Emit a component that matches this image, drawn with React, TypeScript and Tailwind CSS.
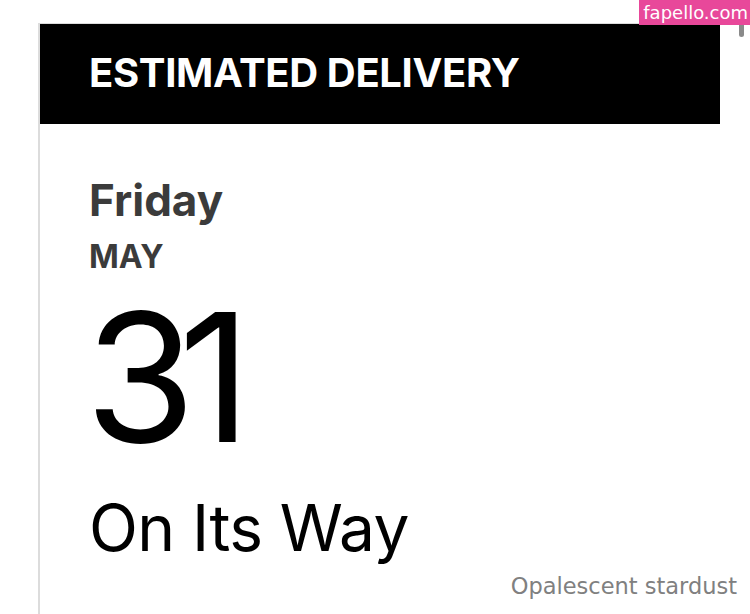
export default function App() {
  return (
    <div className="relative h-[614px] w-[750px] overflow-hidden bg-white">
      {/* watermark */}
      <div className="absolute right-0 top-0 z-10 flex h-[25px] items-center bg-[#e8489a] pl-[4px] pr-[2px] font-['DejaVu_Sans',sans-serif] text-[18px] leading-none text-white">
        fapello.com
      </div>
      <div className="absolute left-[739px] top-[24px] h-[13px] w-[5px] rounded-b-[3px] bg-[#8a8a8a]" />

      <div className="pl-[38px] pt-[23px]">
        <div className="h-[600px] border-l-2 border-t border-[#dcdcdc] font-['Inter',sans-serif]">
          <div className="flex h-[100px] w-[680px] items-center bg-black pb-[3px] pl-[49px]">
            <h1 className="text-[40px] font-bold leading-[40px] tracking-[-0.35px] text-white">ESTIMATED DELIVERY</h1>
          </div>
          <div className="pl-[49px] pt-[50px]">
            <div className="text-[44px] font-bold leading-[52px] text-[#3b3b3b]">Friday</div>
            <div className="mt-[14px] text-[32px] font-bold leading-[34px] text-[#3b3b3b]">MAY</div>
            <div className="-ml-[4px] mt-[3px] text-[179px] font-normal leading-[200px] tracking-[-17px] text-black">31</div>
            <div className="mt-[13px] text-[64px] font-normal leading-[76px] tracking-[-0.6px] text-black">On Its Way</div>
          </div>
          <div className="mt-[5px] pr-[13px] text-right font-['DejaVu_Sans',sans-serif] text-[22.5px] leading-[30px] text-[#808080]">
            Opalescent stardust
          </div>
        </div>
      </div>
    </div>
  )
}
